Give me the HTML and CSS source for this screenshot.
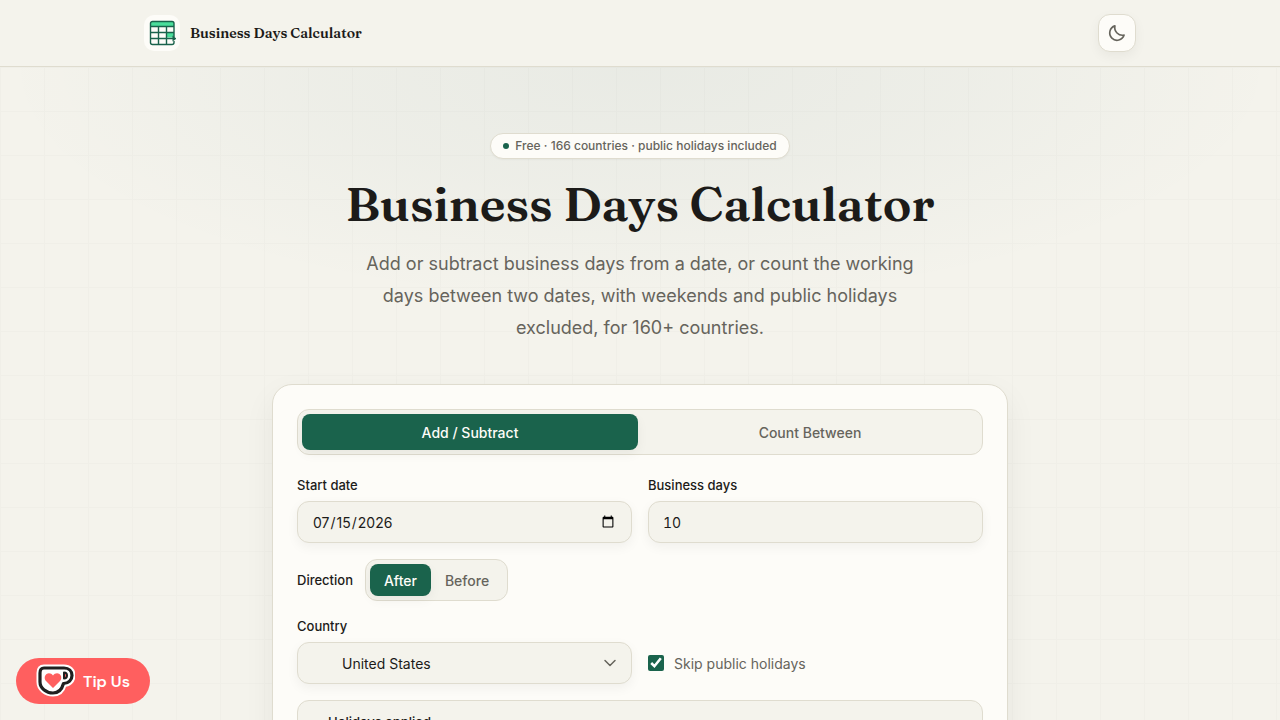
FILE: index.html
```html
<!DOCTYPE html>
<html lang="en">
<head>
  <meta charset="UTF-8">
  <meta name="viewport" content="width=device-width, initial-scale=1.0">
  <title>Business Days Calculator</title>
  <link rel="stylesheet" href="styles.css">
</head>
<body>

  <header class="site-header">
    <div class="header-inner">
      <a href="#" class="brand">
        <span class="brand-icon">
          <svg width="28" height="28" viewBox="0 0 28 28" fill="none">
            <path d="M3 3h23v4H3z" fill="#4ade9b"/>
            <path d="M19 13.500h7v5h-7z" fill="#4ade9b"/>
            <path d="M26 18V4.500a2 2 0 0 0-2-2H4.500a2 2 0 0 0-2 2v19a2 2 0 0 0 2 2H24a2 2 0 0 0 2-2V22" stroke="#1a634c" stroke-width="1.400"/>
            <path d="M2.500 7.500H26M2.500 13.500H26M2.500 19.500H26M10.500 7.500v18M18.500 7.500v18" stroke="#1a634c" stroke-width="1.400"/>
            <path d="M24.500 16.500l4 3-4 3z" fill="#1a634c"/>
          </svg>
        </span>
        <span class="brand-name">Business Days Calculator</span>
      </a>
      <button type="button" class="theme-btn" aria-label="Toggle dark mode">
        <svg width="20" height="20" viewBox="0 0 24 24" fill="none" stroke="currentColor" stroke-width="2" stroke-linecap="round" stroke-linejoin="round">
          <path d="M20.500 14.500A8.800 8.800 0 1 1 9.500 3.500a9.300 9.300 0 0 0 11 11z"/>
        </svg>
      </button>
    </div>
  </header>

  <main class="page">
    <section class="hero">
      <div class="pill"><span class="dot"></span>Free · 166 countries · public holidays included</div>
      <h1>Business Days Calculator</h1>
      <p>Add or subtract business days from a date, or count the working days between two dates, with weekends and public holidays excluded, for 160+ countries.</p>
    </section>

    <form class="card">
      <div class="tabs">
        <button type="button" class="tab active">Add / Subtract</button>
        <button type="button" class="tab">Count Between</button>
      </div>

      <div class="row">
        <div class="field">
          <label for="startDate">Start date</label>
          <input type="date" id="startDate" class="control" value="2026-07-15">
        </div>
        <div class="field">
          <label for="days">Business days</label>
          <input type="number" id="days" class="control days-input" value="10">
        </div>
      </div>

      <div class="direction">
        <span class="direction-label" id="dirLabel">Direction</span>
        <div class="toggle" role="group" aria-labelledby="dirLabel">
          <button type="button" class="toggle-btn active">After</button>
          <button type="button" class="toggle-btn">Before</button>
        </div>
      </div>

      <div class="row">
        <div class="field">
          <label for="country">Country</label>
          <div class="select-wrap">
            <select id="country" class="control">
              <option>United States</option>
            </select>
            <svg class="chevron" width="16" height="16" viewBox="0 0 16 16" fill="none" stroke="currentColor" stroke-width="1.500" stroke-linecap="round" stroke-linejoin="round">
              <path d="M3 5.500l5 5 5-5"/>
            </svg>
          </div>
        </div>
        <label class="check">
          <input type="checkbox" checked>
          Skip public holidays
        </label>
      </div>

      <details class="holidays">
        <summary>Holidays applied</summary>
      </details>
    </form>
  </main>

  <a href="#" class="tip-btn">
    <svg width="40" height="34" viewBox="0 0 40 34" fill="none">
      <path d="M9 4h20c5 0 8 3 8 7.500s-3.500 8-8.500 8C27 25 23.500 29 18 29 11 29 5 24 5 18V9c0-3 1-5 4-5z" fill="#fff" stroke="#fff" stroke-width="7" stroke-linejoin="round"/>
      <path d="M9 4h20c5 0 8 3 8 7.500s-3.500 8-8.500 8C27 25 23.500 29 18 29 11 29 5 24 5 18V9c0-3 1-5 4-5z" fill="#fff" stroke="#202020" stroke-width="3.200" stroke-linejoin="round"/>
      <path d="M29 8.500v6c2 0 3-1.300 3-3s-1-3-3-3z" fill="#ff5f5f" stroke="#202020" stroke-width="2" stroke-linejoin="round"/>
      <path d="M18 24l-7-7c-2-2.200-1.500-5.500.5-7 2.200-1.500 5-.7 6.500 1.500 1.500-2.200 4.300-3 6.500-1.500 2 1.500 2.500 4.800.5 7z" fill="#ff5f5f"/>
    </svg>
    Tip Us
  </a>

</body>
</html>
```
FILE: styles.css
```css
* {
  box-sizing: border-box;
}

body {
  margin: 0;
  font-family: Inter, sans-serif;
  background: #f4f3ec;
  color: #1c1b19;
}

button,
input,
select {
  font-family: inherit;
}

.site-header {
  background: #f4f3ec;
  border-bottom: 1px solid #dfdccf;
}

.header-inner {
  max-width: 1024px;
  margin: 0 auto;
  padding: 14px 16px;
  display: flex;
  align-items: center;
  justify-content: space-between;
}

.brand {
  display: flex;
  align-items: center;
  gap: 10px;
  color: #1c1b19;
  text-decoration: none;
}

.brand-icon {
  width: 36px;
  height: 36px;
  display: flex;
  align-items: center;
  justify-content: center;
  background: #fdfcf8;
  border-radius: 10px;
}

.brand-name {
  font-family: "Fraunces 72pt", Fraunces, "Liberation Serif", serif;
  font-size: 14px;
  font-weight: 600;
  line-height: 20px;
}

.theme-btn {
  width: 38px;
  height: 38px;
  padding: 0;
  display: flex;
  align-items: center;
  justify-content: center;
  background: #fdfcf8;
  color: #66645c;
  border: 1px solid #dfdccf;
  border-radius: 12px;
  box-shadow: 0 4px 12px rgba(28, 27, 25, 0.05);
  cursor: pointer;
}

.page {
  padding: 66px 16px 48px;
  background-image:
    radial-gradient(ellipse 640px 240px at 50% 0, rgba(26, 80, 90, 0.05), rgba(26, 80, 90, 0.03) 50%, transparent),
    linear-gradient(to right, #f0efe8 1px, transparent 1px),
    linear-gradient(to bottom, #f0efe8 1px, transparent 1px);
  background-size: 100% 100%, 44px 44px, 44px 44px;
}

.hero {
  display: flex;
  flex-direction: column;
  align-items: center;
  gap: 16px;
  text-align: center;
  margin-bottom: 40px;
}

.pill {
  display: flex;
  align-items: center;
  gap: 6px;
  padding: 4px 12px;
  font-size: 12px;
  font-weight: 500;
  line-height: 16px;
  color: #66645c;
  background: #fdfcf8;
  border: 1px solid #dfdccf;
  border-radius: 13px;
  box-shadow: 0 1px 2px rgba(28, 27, 25, 0.04);
}

.dot {
  width: 6px;
  height: 6px;
  border-radius: 50%;
  background: #1a634c;
}

.hero h1 {
  margin: 0;
  font-family: "Fraunces 144pt", "Fraunces 72pt", Fraunces, "Liberation Serif", serif;
  font-size: 48px;
  font-weight: 600;
  line-height: 57px;
}

.hero p {
  margin: 0;
  max-width: 576px;
  font-size: 18px;
  line-height: 32px;
  color: #66645c;
}

.card {
  max-width: 736px;
  margin: 0 auto;
  padding: 24px;
  background: #fdfcf8;
  border: 1px solid #dfdccf;
  border-radius: 20px;
  box-shadow: 0 12px 32px rgba(28, 27, 25, 0.06);
}

.tabs {
  display: flex;
  gap: 4px;
  padding: 4px;
  margin-bottom: 21px;
  background: #f4f3ec;
  border: 1px solid #dfdccf;
  border-radius: 12px;
}

.tab,
.toggle-btn {
  border: none;
  border-radius: 8px;
  background: transparent;
  color: #66645c;
  font-size: 14px;
  font-weight: 500;
  cursor: pointer;
}

.tab {
  flex: 1;
  height: 36px;
}

.toggle-btn {
  height: 32px;
  padding: 0 14px;
}

.tab.active,
.toggle-btn.active {
  background: #1a634c;
  color: #fdfcf8;
  box-shadow: 0 4px 12px rgba(28, 27, 25, 0.05);
}

.row {
  display: grid;
  grid-template-columns: 1fr 1fr;
  gap: 16px;
  margin-bottom: 16px;
}

.field label,
.direction-label {
  font-size: 13px;
  font-weight: 500;
  line-height: 19px;
}

.field label {
  display: block;
  margin-bottom: 6px;
}

.control {
  display: block;
  width: 100%;
  height: 42px;
  padding: 0 14px;
  font-size: 14px;
  color: #1c1b19;
  background: #f4f3ec;
  border: 1px solid #dfdccf;
  border-radius: 12px;
  box-shadow: 0 4px 12px rgba(28, 27, 25, 0.05);
}

.days-input {
  font-variant-numeric: tabular-nums;
}

.direction {
  display: flex;
  align-items: center;
  gap: 12px;
  margin-bottom: 16px;
}

.toggle {
  display: flex;
  padding: 4px;
  background: #f4f3ec;
  border: 1px solid #dfdccf;
  border-radius: 12px;
}

.select-wrap {
  position: relative;
}

.select-wrap .control {
  appearance: none;
  padding: 0 40px 0 44px;
}

.chevron {
  position: absolute;
  top: 13px;
  right: 14px;
  color: #66645c;
  pointer-events: none;
}

.check {
  align-self: end;
  height: 42px;
  display: flex;
  align-items: center;
  gap: 10px;
  font-size: 14px;
  color: #66645c;
}

.check input {
  width: 16px;
  height: 16px;
  margin: 0;
  accent-color: #1a634c;
}

.holidays {
  padding: 12px 16px 12px 30px;
  background: #f4f3ec;
  border: 1px solid #dfdccf;
  border-radius: 12px;
}

.holidays summary {
  list-style: none;
  font-size: 13px;
  font-weight: 500;
  line-height: 19px;
  cursor: pointer;
}

.tip-btn {
  position: fixed;
  left: 16px;
  bottom: 16px;
  height: 46px;
  padding: 0 20px 0 19px;
  display: flex;
  align-items: center;
  gap: 8px;
  background: #ff5f5f;
  color: #fff;
  font-family: "DM Sans", Inter, sans-serif;
  font-size: 16px;
  font-weight: 600;
  text-decoration: none;
  border-radius: 23px;
}
```
